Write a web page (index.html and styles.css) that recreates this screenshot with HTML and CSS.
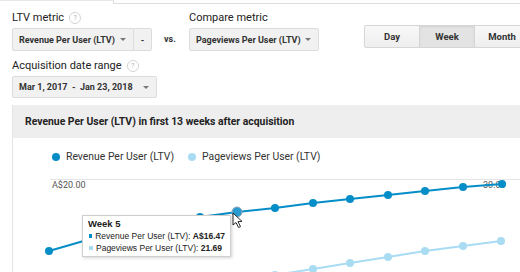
FILE: index.html
```html
<!DOCTYPE html>
<html lang="en">
<head>
<meta charset="UTF-8">
<title>Cohort analysis</title>
<link rel="stylesheet" href="styles.css">
</head>
<body>
<div class="tabline">
    <div class="tab"></div>
    <div class="rest"></div>
</div>
<div class="controls">
    <div class="row">
        <div class="field">
            <div class="label">LTV metric <span class="help">?</span></div>
            <div class="selgroup">
                <div class="sel w1">Revenue Per User (LTV) <i class="caret"></i></div>
                <div class="sel dash">-</div>
            </div>
        </div>
        <span class="vs">vs.</span>
        <div class="field">
            <div class="label">Compare metric</div>
            <div class="sel w2">Pageviews Per User (LTV) <i class="caret"></i></div>
        </div>
        <div class="btns">
            <a class="btn">Day</a>
            <a class="btn active">Week</a>
            <a class="btn">Month</a>
        </div>
    </div>
    <div class="field second">
        <div class="label">Acquisition date range <span class="help">?</span></div>
        <div class="sel w3">Mar 1, 2017&nbsp; -&nbsp; Jan 23, 2018 <i class="caret"></i></div>
    </div>
</div>
<div class="panel">
    <div class="panel-head">Revenue Per User (LTV) in first 13 weeks after acquisition</div>
    <div class="chart">
        <div class="legend">
            <span class="item"><i class="dot dark"></i>Revenue Per User (LTV)</span>
            <span class="item"><i class="dot light"></i>Pageviews Per User (LTV)</span>
        </div>
        <svg class="plot" width="507" height="110" viewBox="0 0 507 110">
            <line x1="37" y1="9.5" x2="507" y2="9.5" stroke="#e4e4e4" stroke-width="1"/>
            <text x="39" y="18" class="axis">A$20.00</text>
            <text x="470" y="18" class="axis">30.00</text>

            <!-- pageviews -->
            <polyline fill="none" stroke="#a9dcf3" stroke-width="2"
                points="187,117 224,111 262,105 300,99 337,93 375,87 412,81 450,76 488,71"/>
            <g fill="#a9dcf3">
                <circle cx="262" cy="105" r="4"/>
                <circle cx="300" cy="99" r="4"/>
                <circle cx="337" cy="93" r="4"/>
                <circle cx="375" cy="87" r="4"/>
                <circle cx="412" cy="81" r="4"/>
                <circle cx="450" cy="76" r="4"/>
                <circle cx="488" cy="71" r="4"/>
            </g>

            <!-- revenue -->
            <polyline fill="none" stroke="#058dc7" stroke-width="2"
                points="36,81 74,70 111,61 149,53 187,47 224,42 262,38 300,33 337,29 375,25 412,21 450,17 489,14"/>
            <g fill="#058dc7">
                <circle cx="36" cy="81" r="4"/>
                <circle cx="74" cy="70" r="4"/>
                <circle cx="111" cy="61" r="4"/>
                <circle cx="149" cy="53" r="4"/>
                <circle cx="187" cy="47" r="4"/>
                <circle cx="262" cy="38" r="4"/>
                <circle cx="300" cy="33" r="4"/>
                <circle cx="337" cy="29" r="4"/>
                <circle cx="375" cy="25" r="4"/>
                <circle cx="412" cy="21" r="4"/>
                <circle cx="450" cy="17" r="4"/>
                <circle cx="489" cy="14" r="4"/>
            </g>
            <circle cx="224" cy="42" r="5" fill="#2a9bd0" stroke="#8fa7b3" stroke-width="1"/>

            <!-- mouse pointer -->
            <polygon points="220,43 220,55 223,52.5 225.5,57.5 227.5,56.6 225,51.6 229,51.4"
                fill="#fff" stroke="#111" stroke-width="0.9" stroke-linejoin="round"/>
        </svg>
        <div class="tip">
            <b class="tip-title">Week 5</b>
            <div class="tip-row"><i class="sq dark"></i>Revenue Per User (LTV): <b>A$16.47</b></div>
            <div class="tip-row"><i class="sq light"></i>Pageviews Per User (LTV): <b>21.69</b></div>
        </div>
    </div>
</div>
</body>
</html>
```
FILE: styles.css
```css
body {
    margin: 0;
    width: 520px;
    height: 272px;
    overflow: hidden;
    background: #fff;
    font-family: Roboto, "Noto Sans", sans-serif;
    color: #222;
}
.tabline {
    display: flex;
    height: 4px;
}
.tabline .tab {
    width: 113px;
    border-top: 1px solid #e8e8e8;
    border-right: 1px solid #ddd;
}
.tabline .rest {
    flex: 1;
    border-bottom: 1px solid #ddd;
}
.controls {
    padding: 7px 0 0 12px;
}
.row {
    display: flex;
    align-items: flex-end;
}
.row > * {
    flex-shrink: 0;
}
.label {
    display: flex;
    align-items: center;
    font-size: 11px;
    line-height: 14px;
    margin-bottom: 3px;
}
.help {
    display: inline-flex;
    align-items: center;
    justify-content: center;
    width: 10px;
    height: 10px;
    margin-left: 5px;
    border: 1px solid #d4d4d4;
    border-radius: 50%;
    font-size: 8px;
    color: #bbb;
}
.selgroup {
    display: flex;
}
.sel {
    display: flex;
    flex-shrink: 0;
    align-items: center;
    justify-content: space-between;
    box-sizing: border-box;
    height: 23px;
    padding: 0 7px 0 6px;
    border: 1px solid #dcdcdc;
    border-radius: 2px;
    background: #f1f1f1;
    font-size: 9px;
    font-weight: 700;
    color: #333;
    white-space: nowrap;
}
.w1 {
    width: 122px;
    border-radius: 2px 0 0 2px;
}
.dash {
    width: 19px;
    margin-left: -1px;
    justify-content: center;
    padding: 0;
    border-radius: 0 2px 2px 0;
}
.w2 {
    width: 130px;
}
.w3 {
    width: 145px;
    height: 22px;
}
.caret {
    width: 0;
    height: 0;
    border-left: 3px solid transparent;
    border-right: 3px solid transparent;
    border-top: 3px solid #777;
}
.vs {
    width: 37px;
    box-sizing: border-box;
    padding-left: 12px;
    line-height: 23px;
    font-size: 9px;
    font-weight: 700;
    color: #333;
}
.btns {
    display: flex;
    margin: 0 0 3px 46px;
}
.btn {
    flex-shrink: 0;
    box-sizing: border-box;
    width: 56px;
    height: 23px;
    line-height: 21px;
    text-align: center;
    border: 1px solid #d6d6d6;
    margin-left: -1px;
    background: linear-gradient(#f8f8f8, #eeeeee);
    font-size: 9.5px;
    font-weight: 700;
    color: #333;
}
.btn:first-child {
    border-radius: 2px 0 0 2px;
}
.btn.active {
    background: #e3e3e3;
    box-shadow: inset 0 1px 2px rgba(0, 0, 0, .08);
}
.second {
    margin-top: 8px;
}
.panel {
    margin: 7px 0 0 12px;
    border-left: 1px solid #e4e4e4;
}
.panel-head {
    height: 33px;
    line-height: 33px;
    padding-left: 12px;
    background: #eeeeee;
    font-size: 10.4px;
    font-weight: 700;
    color: #222;
}
.chart {
    position: relative;
}
.legend {
    display: flex;
    padding: 12px 0 6px 39px;
    font-size: 10.4px;
    line-height: 14px;
    color: #333;
}
.item {
    display: flex;
    align-items: center;
    margin-right: 14px;
}
.dot {
    width: 8px;
    height: 8px;
    border-radius: 50%;
    margin-right: 6px;
}
.dark {
    background: #058dc7;
}
.light {
    background: #a9dcf3;
}
.plot {
    display: block;
}
.axis {
    font-family: Roboto, "Noto Sans", sans-serif;
    font-size: 9px;
    fill: #555;
}
.tip {
    position: absolute;
    left: 69px;
    top: 77px;
    width: 149px;
    box-sizing: border-box;
    padding: 2px 5px;
    background: #fff;
    border: 1px solid #cfcfcf;
    box-shadow: 1px 1px 3px rgba(0, 0, 0, .18);
    font-family: "Liberation Sans", Arial, sans-serif;
    font-size: 8.5px;
    line-height: 12px;
    color: #222;
}
.tip-title {
    display: block;
    font-size: 9.5px;
}
.tip-row {
    display: flex;
    align-items: center;
    white-space: pre;
}
.sq {
    width: 4px;
    height: 4px;
    margin: 0 3px 0 1px;
}
```
